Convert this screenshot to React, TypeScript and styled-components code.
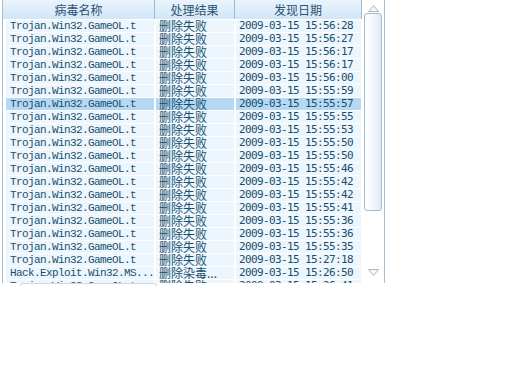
import React from "react";
import styled, { createGlobalStyle } from "styled-components";

type VirusRecord = {
  name: string;
  result: string;
  found: string;
};

const records: Array<VirusRecord> = [
  { name: "Trojan.Win32.GameOL.t", result: "删除失败", found: "2009-03-15 15:56:28" },
  { name: "Trojan.Win32.GameOL.t", result: "删除失败", found: "2009-03-15 15:56:27" },
  { name: "Trojan.Win32.GameOL.t", result: "删除失败", found: "2009-03-15 15:56:17" },
  { name: "Trojan.Win32.GameOL.t", result: "删除失败", found: "2009-03-15 15:56:17" },
  { name: "Trojan.Win32.GameOL.t", result: "删除失败", found: "2009-03-15 15:56:00" },
  { name: "Trojan.Win32.GameOL.t", result: "删除失败", found: "2009-03-15 15:55:59" },
  { name: "Trojan.Win32.GameOL.t", result: "删除失败", found: "2009-03-15 15:55:57" },
  { name: "Trojan.Win32.GameOL.t", result: "删除失败", found: "2009-03-15 15:55:55" },
  { name: "Trojan.Win32.GameOL.t", result: "删除失败", found: "2009-03-15 15:55:53" },
  { name: "Trojan.Win32.GameOL.t", result: "删除失败", found: "2009-03-15 15:55:50" },
  { name: "Trojan.Win32.GameOL.t", result: "删除失败", found: "2009-03-15 15:55:50" },
  { name: "Trojan.Win32.GameOL.t", result: "删除失败", found: "2009-03-15 15:55:46" },
  { name: "Trojan.Win32.GameOL.t", result: "删除失败", found: "2009-03-15 15:55:42" },
  { name: "Trojan.Win32.GameOL.t", result: "删除失败", found: "2009-03-15 15:55:42" },
  { name: "Trojan.Win32.GameOL.t", result: "删除失败", found: "2009-03-15 15:55:41" },
  { name: "Trojan.Win32.GameOL.t", result: "删除失败", found: "2009-03-15 15:55:36" },
  { name: "Trojan.Win32.GameOL.t", result: "删除失败", found: "2009-03-15 15:55:36" },
  { name: "Trojan.Win32.GameOL.t", result: "删除失败", found: "2009-03-15 15:55:35" },
  { name: "Trojan.Win32.GameOL.t", result: "删除失败", found: "2009-03-15 15:27:18" },
  { name: "Hack.Exploit.Win32.MS...", result: "删除染毒...", found: "2009-03-15 15:26:50" },
  { name: "Trojan.Win32.GameOL.t", result: "删除失败", found: "2009-03-15 15:26:41" },
];

const SELECTED_ROW = 6;

export default function App() {
  return (
    <>
      <GlobalStyle />
      <Panel>
        <ListArea>
          <HeaderRow>
            <HeaderCell>病毒名称</HeaderCell>
            <HeaderCell>处理结果</HeaderCell>
            <HeaderCell>发现日期</HeaderCell>
          </HeaderRow>
          {records.map((rec, i) => (
            <Row key={i}>
              <NameCell $selected={i === SELECTED_ROW}>{rec.name}</NameCell>
              <ResultCell $selected={i === SELECTED_ROW}>{rec.result}</ResultCell>
              <DateCell $selected={i === SELECTED_ROW}>{rec.found}</DateCell>
            </Row>
          ))}
        </ListArea>
        <ScrollBar>
          <ArrowButton>
            <svg width="13" height="9" viewBox="0 0 13 9">
              <path d="M1.5 7.5 L6.5 1.5 L11.5 7.5 Z" fill="#f4f8fc" stroke="#a9b8c6" />
            </svg>
          </ArrowButton>
          <Thumb />
          <Track />
          <ArrowButton>
            <svg width="13" height="9" viewBox="0 0 13 9">
              <path d="M1.5 1.5 L11.5 1.5 L6.5 7.5 Z" fill="#f4f8fc" stroke="#a9b8c6" />
            </svg>
          </ArrowButton>
        </ScrollBar>
      </Panel>
      <NextBox />
    </>
  );
}

const GlobalStyle = createGlobalStyle`
  body {
    margin: 0;
    background: #ffffff;
  }
`;

const Panel = styled.div`
  display: flex;
  width: 381px;
  height: 283px;
  margin-left: 2px;
  border-left: 1px solid #a6bed4;
  border-right: 1px solid #a6bed4;
  background: #ffffff;
  overflow: hidden;
`;

const ListArea = styled.div`
  display: flex;
  flex-direction: column;
  width: 359px;
`;

const COLUMNS = "152px 80px 127px";

const HeaderRow = styled.div`
  display: grid;
  grid-template-columns: ${COLUMNS};
  height: 19px;
  border-bottom: 1px solid #ffffff;
  background: linear-gradient(#e9f4fd, #d2e6f7);
  flex-shrink: 0;
`;

const HeaderCell = styled.div`
  display: flex;
  align-items: center;
  justify-content: center;
  border-right: 1px solid #9cbad4;
  font-family: "Noto Sans CJK SC", sans-serif;
  font-size: 12px;
  line-height: 14px;
  color: #2a5273;
`;

const Row = styled.div`
  display: grid;
  grid-template-columns: ${COLUMNS};
  height: 13px;
  flex-shrink: 0;
`;

const Cell = styled.div<{ $selected: boolean }>`
  height: 12px;
  margin-right: 1px;
  border-bottom: 1px solid #fbfdff;
  padding-left: 3px;
  background: ${({ $selected }) => ($selected ? "#b6d8f3" : "#eef6fd")};
  color: #17506f;
  white-space: nowrap;
  overflow: hidden;
  line-height: 12px;
`;

const NameCell = styled(Cell)`
  margin-left: 3px;
  padding-left: 4px;
  font-family: "Liberation Mono", monospace;
  font-size: 11px;
  letter-spacing: -0.6px;
`;

const ResultCell = styled(Cell)`
  margin-left: 1px;
  font-family: "Noto Sans CJK SC", sans-serif;
  font-size: 12px;
`;

const DateCell = styled(Cell)`
  margin-left: 1px;
  font-family: "DejaVu Sans Mono", monospace;
  font-size: 11px;
  letter-spacing: -0.62px;
`;

const ScrollBar = styled.div`
  display: flex;
  flex-direction: column;
  align-items: center;
  width: 22px;
  padding-top: 3px;
  background: #ffffff;
`;

const ArrowButton = styled.div`
  display: flex;
  align-items: center;
  justify-content: center;
  width: 18px;
  height: 10px;
  flex-shrink: 0;
`;

const Thumb = styled.div`
  width: 16px;
  height: 196px;
  flex-shrink: 0;
  border: 1px solid #a8bccf;
  border-radius: 3px;
  background: linear-gradient(90deg, #ffffff, #f3f8fd 50%, #dce9f6);
`;

const Track = styled.div`
  flex: 0 0 56px;
`;

const NextBox = styled.div`
  width: 135px;
  height: 2px;
  margin-left: 20px;
  border: 1px solid #d2d8de;
  border-bottom: none;
  border-radius: 3px 3px 0 0;
`;
